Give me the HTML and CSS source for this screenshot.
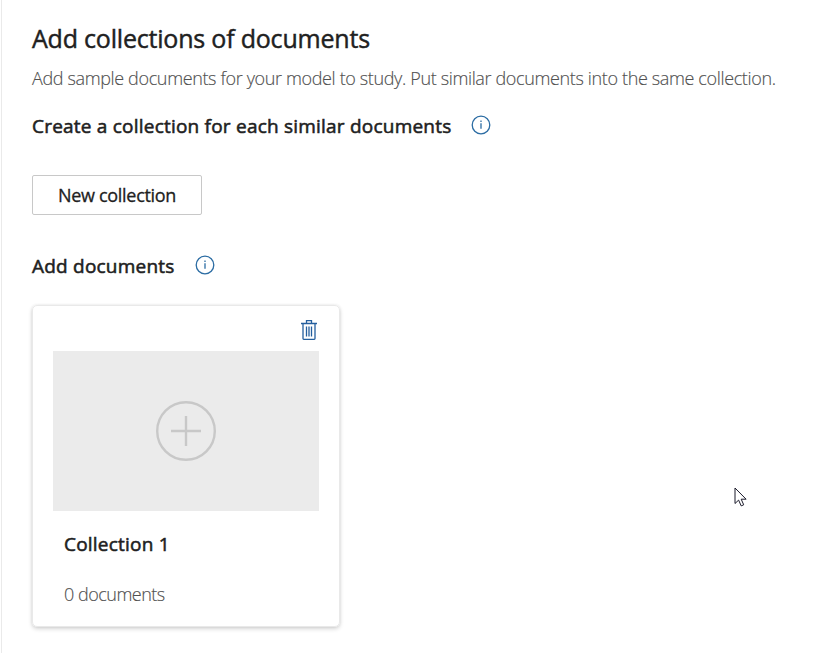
FILE: index.html
```html
<!DOCTYPE html>
<html lang="en">
<head>
<meta charset="utf-8">
<title>Add collections of documents</title>
<link rel="stylesheet" href="styles.css">
</head>
<body>
<main class="panel">
  <h1 class="title">Add collections of documents</h1>
  <p class="subtitle">Add sample documents for your model to study. Put similar documents into the same collection.</p>
  <div class="heading heading-create">
    <h2>Create a collection for each similar documents</h2>
    <svg class="info" viewBox="0 0 20 20"><circle cx="10" cy="10" r="8.8"/><path d="M10 8.2v5.6M10 5.6v1.3"/></svg>
  </div>
  <button class="new-button" type="button">New collection</button>
  <div class="heading heading-add">
    <h2>Add documents</h2>
    <svg class="info" viewBox="0 0 20 20"><circle cx="10" cy="10" r="8.8"/><path d="M10 8.2v5.6M10 5.6v1.3"/></svg>
  </div>
  <section class="card">
    <div class="card-tools">
      <svg class="trash" viewBox="0 0 16 20"><path d="M0 3.5h16M5.5 3V.7h5V3M2 3.5v15q0 .8.8.8h10.4q.8 0 .8-.8v-15M5.5 6.5v10M8 6.5v10M10.5 6.5v10"/></svg>
    </div>
    <div class="dropzone">
      <svg class="plus" viewBox="0 0 60 60"><circle cx="30" cy="30" r="28.8"/><path d="M15 30h30M30 15v30"/></svg>
    </div>
    <h3 class="card-title">Collection 1</h3>
    <p class="card-count">0 documents</p>
  </section>
</main>
<svg class="cursor" viewBox="0 0 13 21"><path d="M1 1v15.5l3.6-3.4 2.6 5.8 2.5-1.1-2.5-5.6h4.9z"/></svg>
</body>
</html>
```

FILE: styles.css
```css
* { box-sizing: border-box; }
body {
  margin: 0;
  background: #fff;
  color: #212121;
  font-family: "Open Sans", "Noto Sans", sans-serif;
}
h1, h2, h3, p { margin: 0; white-space: nowrap; }
.panel {
  height: 653px;
  margin-left: 1px;
  padding: 21px 0 0 30px;
  border-left: 1px solid #eaeaea;
  overflow: hidden;
}
.title { font-size: 25px; line-height: 34px; font-weight: 400; letter-spacing: -0.2px; -webkit-text-stroke: 0.45px; }
.subtitle { margin-top: 10px; font-size: 18px; line-height: 26px; font-weight: 300; color: #505050; letter-spacing: -0.36px; -webkit-text-stroke: 0.15px; }
.heading { display: flex; align-items: center; height: 28px; gap: 20px; }
.heading h2 { font-size: 19px; line-height: 28px; font-weight: 400; letter-spacing: 0.215px; -webkit-text-stroke: 0.55px; }
.heading-create { margin-top: 21px; }
.info { width: 20px; height: 20px; margin-top: -3px; fill: none; stroke: #2b6ca3; stroke-width: 1.3; }
.new-button {
  display: block;
  width: 170px;
  height: 40px;
  margin-top: 35px;
  padding: 0;
  border: 1px solid #c8c8c8;
  border-radius: 2px;
  background: #fff;
  color: #212121;
  font: 400 18px/36px "Open Sans", "Noto Sans", sans-serif;
  letter-spacing: -0.3px;
  -webkit-text-stroke: 0.3px;
}
.heading-add { margin-top: 37px; }
.card {
  width: 308px;
  height: 322px;
  margin-top: 25px;
  padding: 0 20px;
  border: 1px solid #e9e9e9;
  border-radius: 5px;
  box-shadow: 0 2px 4px rgba(0, 0, 0, .16), 0 0 3px rgba(0, 0, 0, .08);
}
.card-tools { display: flex; justify-content: flex-end; height: 45px; padding: 14px 2px 0 0; }
.trash { width: 16px; height: 20px; fill: none; stroke: #245f9e; stroke-width: 1.3; overflow: visible; }
.dropzone { display: flex; align-items: center; justify-content: center; height: 160px; background: #ebebeb; }
.plus { width: 60px; height: 60px; fill: none; stroke: #c8c8c8; stroke-width: 2.4; }
.card-title { margin: 19px 0 0 11px; font-size: 19px; line-height: 28px; font-weight: 400; letter-spacing: 0.215px; -webkit-text-stroke: 0.55px; }
.card-count { margin: 23px 0 0 11px; font-size: 18px; line-height: 26px; font-weight: 300; color: #505050; letter-spacing: -0.5px; -webkit-text-stroke: 0.15px; }
.cursor { position: absolute; left: 734px; top: 487px; width: 13px; height: 21px; fill: #fff; stroke: #1b1b2b; stroke-width: 1; }
```
